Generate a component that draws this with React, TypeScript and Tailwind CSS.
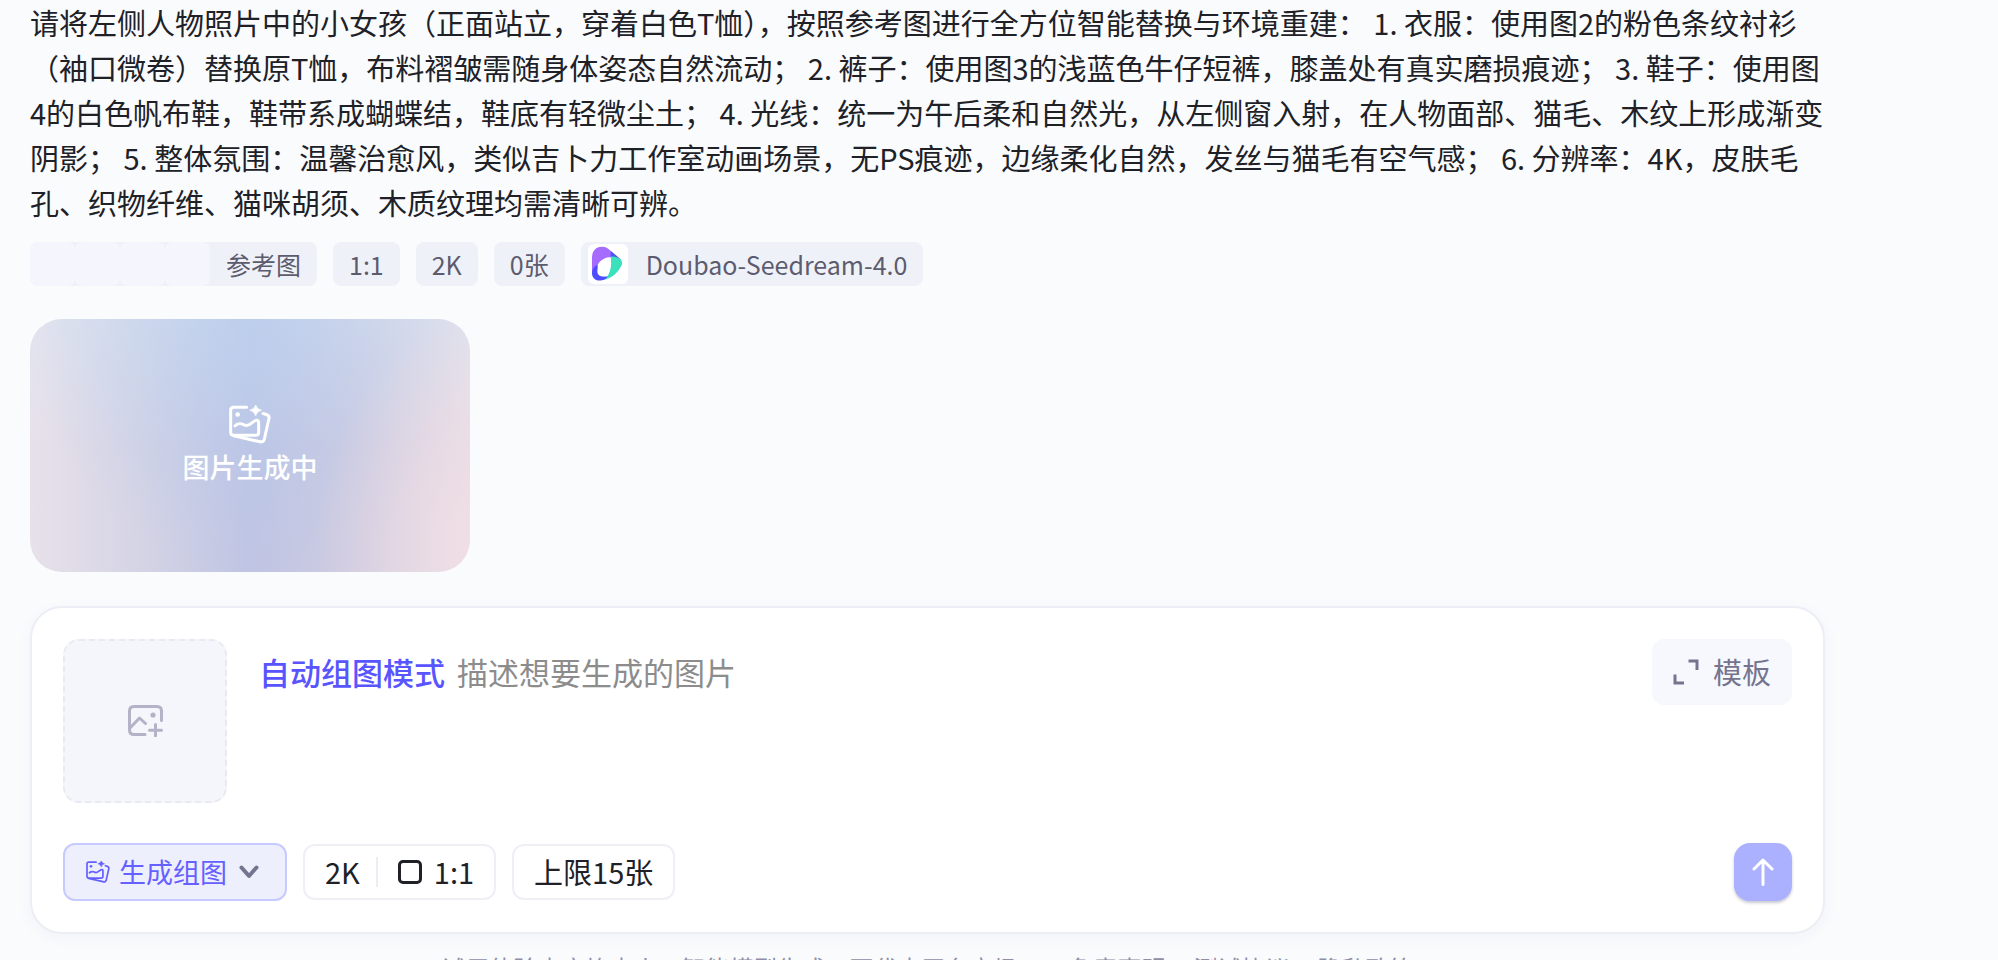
import { useState } from 'react';

const PROMPT =
  '请将左侧人物照片中的小女孩（正面站立，穿着白色T恤），按照参考图进行全方位智能替换与环境重建： 1. 衣服：使用图2的粉色条纹衬衫（袖口微卷）替换原T恤，布料褶皱需随身体姿态自然流动； 2. 裤子：使用图3的浅蓝色牛仔短裤，膝盖处有真实磨损痕迹； 3. 鞋子：使用图4的白色帆布鞋，鞋带系成蝴蝶结，鞋底有轻微尘土； 4. 光线：统一为午后柔和自然光，从左侧窗入射，在人物面部、猫毛、木纹上形成渐变阴影； 5. 整体氛围：温馨治愈风，类似吉卜力工作室动画场景，无PS痕迹，边缘柔化自然，发丝与猫毛有空气感； 6. 分辨率：4K，皮肤毛孔、织物纤维、猫咪胡须、木质纹理均需清晰可辨。';

const GroupImageIcon = ({ className }: { className?: string }) => (
  <svg viewBox="0 0 126 116" fill="none" stroke="currentColor" strokeWidth="9" strokeLinecap="round" strokeLinejoin="round" className={className}>
    <path d="M53 6H14Q5 6 5 15V81Q5 90 14 90H80Q89 90 89 81V54Q89 42 79 46C70 50 64 62 52 61C42 60 34 48 18 62" />
    <path d="M102 25L112 28Q122 31 120 40L106 102Q103 112 94 110L14 92" />
    <circle cx="26" cy="28" r="7" fill="currentColor" stroke="none" />
    <path d="M80 -2Q83 12 98 15Q83 18 80 32Q77 18 62 15Q77 12 80 -2Z" fill="currentColor" strokeWidth="2" />
  </svg>
);

const AddImageIcon = () => (
  <svg viewBox="0 0 35 32" fill="none" stroke="currentColor" strokeWidth="3" strokeLinecap="round" strokeLinejoin="round" className="h-8 w-[35px]">
    <path d="M17 29.5H6Q1.500 29.500 1.500 25V6Q1.500 1.500 6 1.500H29Q33.500 1.500 33.500 6V15.500" />
    <path d="M2 23L11.500 13L17.500 18.500" />
    <path d="M27.500 19.500V31M21.500 25.200H33.500" />
    <circle cx="25" cy="10" r="2.600" fill="currentColor" stroke="none" />
  </svg>
);

const DoubaoLogo = () => (
  <svg viewBox="0 0 120 120" className="size-10 rounded-md bg-white">
    <path d="M12 42C12 20 24 8 42 8C54 8 62 14 69 22L72 42C50 40 34 48 28 66L12 88Z" fill="#a66bff" />
    <path d="M68 20L98 46L88 50L68 42Z" fill="#4f52f5" />
    <path d="M28 62C14 70 12 80 12 90C14 106 28 112 42 109C52 107 58 102 62 96C46 100 32 94 28 62Z" fill="#4d4dff" />
    <path d="M68 38C82 36 92 42 98 46C106 56 102 64 95 74C84 90 68 102 52 107C64 92 70 70 68 38Z" fill="#3be0bd" />
    <path d="M68 40C72 62 67 84 58 96C44 100 30 98 28 84C27 60 44 38 68 40Z" fill="#fff" />
  </svg>
);

const Tag = ({ children }: { children: React.ReactNode }) => (
  <span className="flex h-11 items-center rounded-lg bg-[#eff1f9] px-4">{children}</span>
);

const App = () => {
  const [text, setText] = useState('');
  const thumbs = [1, 2, 3, 4];
  const links = ['免责声明', '测试协议', '隐私政策'];

  return (
    <div className="h-screen overflow-hidden bg-[#fafbfd] pl-[30px] font-['Noto_Sans_CJK_SC',sans-serif] text-[#202127]">
      <main className="w-full max-w-[1795px]">
        <p className="text-[29px] leading-[45px]">{PROMPT}</p>

        <div className="mt-[17px] flex gap-4 text-[25px] leading-9 text-[#5d5c6e]">
          <div className="flex h-11 items-center overflow-hidden rounded-lg bg-[#eff1f9] pr-4">
            <div className="flex">
              {thumbs.map((t) => (
                <span key={t} className="h-11 w-[45px] rounded-lg bg-[#f5f5fe]" />
              ))}
            </div>
            <span className="ml-4">参考图</span>
          </div>
          <Tag>1:1</Tag>
          <Tag>2K</Tag>
          <Tag>0张</Tag>
          <div className="flex h-11 items-center gap-[18px] rounded-lg bg-[#eff1f9] pr-4 pl-[7px]">
            <DoubaoLogo />
            <span>Doubao-Seedream-4.0</span>
          </div>
        </div>

        <div className="mt-[33px] flex h-[253px] w-[440px] flex-col items-center justify-center rounded-[32px] bg-[radial-gradient(ellipse_35%_90%_at_100%_90%,#f4dfe4bb_0%,#f4dfe400_100%),radial-gradient(ellipse_50%_100%_at_50%_0%,#b2caee99_0%,#b2caee00_100%),linear-gradient(180deg,#dce8f477_0%,#dce8f400_50%),linear-gradient(90deg,#e8e1ea_0%,#d5d4e5_25%,#bfc4e3_50%,#cfcce1_75%,#e5dce6_100%)] pt-[2px] text-white">
          <GroupImageIcon className="h-[39px] w-[42px]" />
          <span className="text-[27px] leading-[45px] font-medium">图片生成中</span>
        </div>

        <section className="mt-[34px] rounded-[32px] border-2 border-[#ededf5] bg-white px-[31px] pt-[31px] pb-[31px] shadow-[0_4px_16px_rgba(60,60,110,0.04)]">
          <div className="flex items-start">
            <button
              type="button"
              aria-label="添加图片"
              className="flex size-[164px] shrink-0 items-center justify-center rounded-2xl border-2 border-dashed border-[#e9eaf0] bg-[#f5f6fb] text-[#b4b2c6]"
            >
              <AddImageIcon />
            </button>
            <label htmlFor="prompt" className="mt-[10px] ml-8 shrink-0 text-[31px] leading-[45px] font-medium text-[#5855ff]">
              自动组图模式
            </label>
            <textarea
              id="prompt"
              value={text}
              onChange={(e) => setText(e.target.value)}
              placeholder="描述想要生成的图片"
              className="mt-[10px] ml-3 h-[150px] min-w-0 flex-1 resize-none text-[31px] leading-[45px] outline-none placeholder:text-[#8c8c8c]"
            />
            <button type="button" className="flex h-[66px] shrink-0 items-center gap-[14px] rounded-xl bg-[#f7f8fd] px-[21px] text-[29px] text-[#74748f]">
              <svg viewBox="0 0 26 26" fill="none" stroke="currentColor" strokeWidth="3" className="size-[26px]">
                <path d="M15.500 2H24V11M2 15.500V24H11" />
              </svg>
              模板
            </button>
          </div>

          <div className="mt-10 flex items-center gap-4">
            <button type="button" className="flex h-[58px] items-center rounded-xl border-2 border-[#c6caff] bg-[#edeffc] pr-[26px] pl-[21px] text-[27px] text-[#6560ff]">
              <GroupImageIcon className="h-[22px] w-6" />
              <span className="ml-[9px]">生成组图</span>
              <svg viewBox="0 0 20 14" fill="none" stroke="#74748f" strokeWidth="4" strokeLinecap="round" strokeLinejoin="round" className="ml-3 h-[14px] w-5">
                <path d="M2.500 2.500L10 11L17.500 2.500" />
              </svg>
            </button>
            <button type="button" className="flex h-14 items-center rounded-xl border-2 border-[#efeff6] px-5 text-[29px]">
              2K
              <span className="mr-5 ml-4 h-[30px] w-[2px] bg-[#ededf3]" />
              <span className="mr-3 size-6 rounded-[5px] border-3 border-[#202127]" />
              1:1
            </button>
            <button type="button" className="flex h-14 items-center rounded-xl border-2 border-[#efeff6] px-5 text-[29px]">
              上限15张
            </button>
            <button
              type="button"
              aria-label="发送"
              className="ml-auto flex size-[58px] items-center justify-center rounded-2xl bg-[#abb0ff] text-white shadow-[0_2px_3px_rgba(40,40,90,0.25)]"
            >
              <svg viewBox="0 0 22 28" fill="none" stroke="currentColor" strokeWidth="3" strokeLinecap="round" strokeLinejoin="round" className="h-7 w-[22px]">
                <path d="M11 26.500V2M2 11L11 2L20 11" />
              </svg>
            </button>
          </div>
        </section>

        <footer className="mt-4 flex justify-center gap-7 text-[24px] leading-9 whitespace-nowrap text-[#8f8ea6]">
          <span>试用体验内容均由人工智能模型生成，不代表平台立场。</span>
          {links.map((link) => (
            <a key={link} href="#">
              {link}
            </a>
          ))}
        </footer>
      </main>
    </div>
  );
};

export default App;
